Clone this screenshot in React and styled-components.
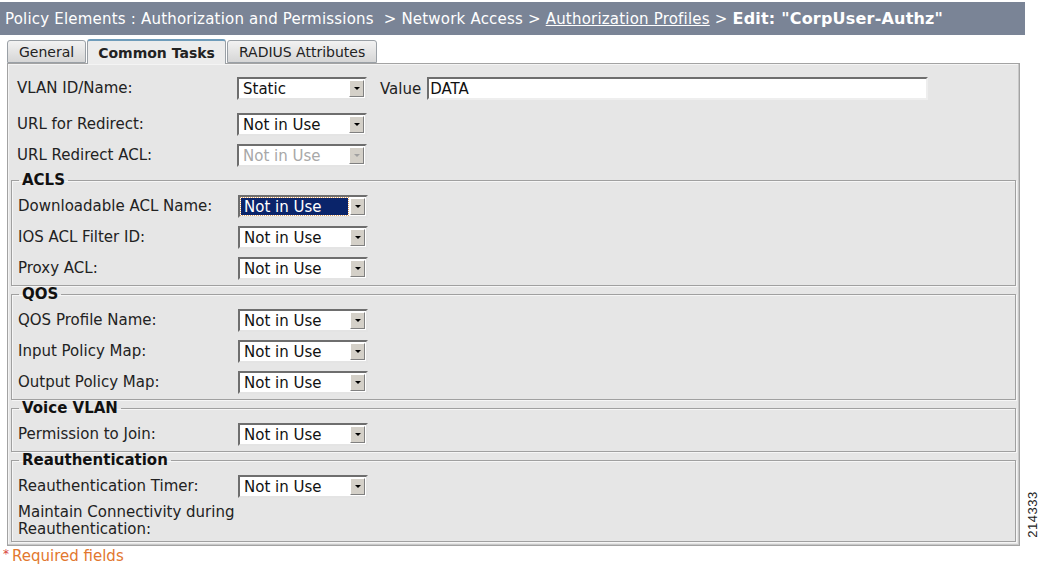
import React from 'react';
import styled, { createGlobalStyle } from 'styled-components';

const GlobalStyle = createGlobalStyle`
  html, body {
    margin: 0;
    padding: 0;
    background: #fff;
  }
  body {
    font-family: "DejaVu Sans", Verdana, sans-serif;
    font-size: 15px;
    color: #222;
  }
`;

const Page = styled.div`
  position: relative;
  width: 1045px;
  height: 572px;
  padding-top: 2px;
  box-sizing: border-box;
  overflow: hidden;
`;

const Header = styled.div`
  width: 1025px;
  height: 33px;
  box-sizing: border-box;
  background: #7a8496;
  color: #fff;
  display: flex;
  align-items: center;
  padding-left: 5px;
  white-space: pre;
  font-size: 15px;
  letter-spacing: 0.2px;
`;

const Crumb = styled.span`
  text-decoration: ${(p) => (p.link ? 'underline' : 'none')};
  font-weight: ${(p) => (p.current ? 'bold' : 'normal')};
  font-size: ${(p) => (p.current ? '16px' : '15px')};
`;

const TabBar = styled.div`
  display: flex;
  align-items: flex-end;
  margin: 3px 0 0 7px;
  height: 25px;
`;

const Tab = styled.div`
  height: ${(p) => (p.active ? '25px' : '23px')};
  box-sizing: border-box;
  padding: 0 ${(p) => (p.active ? '10px' : '11px')};
  display: flex;
  align-items: center;
  font-size: 14px;
  font-weight: ${(p) => (p.active ? 'bold' : 'normal')};
  color: #222;
  border: 1px solid #9aa0a6;
  border-bottom: ${(p) => (p.active ? 'none' : '1px solid #9aa0a6')};
  border-top: ${(p) => (p.active ? '2px solid #6f9cba' : '1px solid #9aa0a6')};
  border-radius: 3px 3px 0 0;
  background: ${(p) => (p.active ? '#ececec' : 'linear-gradient(#f2f2f2, #d6d6d6)')};
  margin-right: 1px;
  position: relative;
  top: ${(p) => (p.active ? '1px' : '0')};
  z-index: ${(p) => (p.active ? 2 : 1)};
`;

const Panel = styled.div`
  margin-left: 7px;
  width: 1013px;
  height: 483px;
  box-sizing: border-box;
  background: #e6e6e6;
  border: 1px solid #a3a3a3;
  box-shadow: inset -1px -1px 0 #c8c8c8, inset 1px 1px 0 #f4f4f4;
  padding: 9px 3px 0 2px;
  display: flex;
  flex-direction: column;
`;

const Row = styled.div`
  display: flex;
  flex-shrink: 0;
  align-items: ${(p) => (p.top ? 'flex-start' : 'center')};
  height: ${(p) => p.h || 31}px;
  margin-top: ${(p) => p.mt || 0}px;
  padding-left: ${(p) => p.pl || 7}px;
  padding-top: ${(p) => (p.top ? 2 : 0)}px;
  box-sizing: border-box;
`;

const Label = styled.div`
  width: ${(p) => p.w || 220}px;
  flex: none;
  font-size: 15px;
  color: #222;
  line-height: 17px;
`;

const SelectBox = styled.div`
  width: 130px;
  height: 23px;
  box-sizing: border-box;
  border: 2px solid;
  border-color: #6e6e6e #e4e4e4 #e4e4e4 #6e6e6e;
  background: #fff;
  display: flex;
  align-items: stretch;
  padding: 1px;
`;

const SelectText = styled.div`
  flex: 1;
  display: flex;
  align-items: center;
  padding-left: 3px;
  font-size: 15px;
  color: ${(p) => (p.disabled ? '#a8a8a8' : '#111')};
  background: ${(p) => (p.selected ? '#0a246a' : 'transparent')};
  outline: ${(p) => (p.selected ? '1px dotted #e0a060' : 'none')};
  ${(p) => p.selected && 'color: #fff;'}
  margin-right: 2px;
  white-space: nowrap;
`;

const SelectButton = styled.div`
  width: 15px;
  flex: none;
  box-sizing: border-box;
  background: #d4d0c8;
  border: 1px solid;
  border-color: #fff #808080 #808080 #fff;
  display: flex;
  align-items: center;
  justify-content: center;
`;

const Arrow = styled.div`
  width: 0;
  height: 0;
  border-left: 3px solid transparent;
  border-right: 3px solid transparent;
  border-top: 3px solid ${(p) => (p.disabled ? '#a0a0a0' : '#000')};
`;

const Select = ({ value = 'Not in Use', disabled, selected }) => (
  <SelectBox>
    <SelectText disabled={disabled} selected={selected}>
      {value}
    </SelectText>
    <SelectButton>
      <Arrow disabled={disabled} />
    </SelectButton>
  </SelectBox>
);

const ValueLabel = styled.span`
  margin: 0 6px 0 13px;
  font-size: 15px;
`;

const TextInput = styled.div`
  width: 501px;
  height: 23px;
  box-sizing: border-box;
  border: 2px solid;
  border-color: #6e6e6e #eeeeee #eeeeee #6e6e6e;
  background: #fff;
  display: flex;
  align-items: center;
  padding-left: 1px;
  font-size: 15px;
  color: #111;
`;

const Group = styled.fieldset`
  flex-shrink: 0;
  margin: ${(p) => p.mt || 0}px 0 0 1px;
  padding: 2px 0 1px 0;
  border: 1px solid #a0a0a0;
  box-shadow: 1px 1px 0 #f6f6f6, inset 1px 1px 0 #f6f6f6;
  border-radius: 0;
  min-width: 0;
`;

const Legend = styled.legend`
  font-weight: bold;
  font-size: 15px;
  padding: 0 3px;
  margin-left: 7px;
  color: #111;
  line-height: 17px;
`;

const Note = styled.div`
  margin: 1px 0 0 3px;
  font-size: 15px;
  color: #e2772e;
`;

const Star = styled.span`
  color: #d8433b;
  font-size: 12px;
  vertical-align: top;
  margin-right: 3px;
`;

const FigureId = styled.div`
  position: absolute;
  left: 1009px;
  top: 507px;
  transform: rotate(-90deg);
  font-family: "Liberation Sans", Arial, sans-serif;
  font-size: 13px;
  color: #222;
  letter-spacing: 0.5px;
`;

export default function App() {
  return (
    <Page>
      <GlobalStyle />
      <Header>
        <Crumb>Policy Elements : Authorization and Permissions  &gt; Network Access &gt; </Crumb>
        <Crumb link>Authorization Profiles</Crumb>
        <Crumb> &gt; </Crumb>
        <Crumb current>Edit: "CorpUser-Authz"</Crumb>
      </Header>
      <TabBar>
        <Tab>General</Tab>
        <Tab active>Common Tasks</Tab>
        <Tab>RADIUS Attributes</Tab>
      </TabBar>
      <Panel>
        <Row>
          <Label>VLAN ID/Name:</Label>
          <Select value="Static" />
          <ValueLabel>Value</ValueLabel>
          <TextInput>DATA</TextInput>
        </Row>
        <Row mt={5}>
          <Label>URL for Redirect:</Label>
          <Select />
        </Row>
        <Row>
          <Label>URL Redirect ACL:</Label>
          <Select disabled />
        </Row>

        <Group mt={1}>
          <Legend>ACLS</Legend>
          <Row pl={6}>
            <Label>Downloadable ACL Name:</Label>
            <Select selected />
          </Row>
          <Row pl={6}>
            <Label>IOS ACL Filter ID:</Label>
            <Select />
          </Row>
          <Row pl={6}>
            <Label>Proxy ACL:</Label>
            <Select />
          </Row>
        </Group>

        <Group>
          <Legend>QOS</Legend>
          <Row pl={6}>
            <Label>QOS Profile Name:</Label>
            <Select />
          </Row>
          <Row pl={6}>
            <Label>Input Policy Map:</Label>
            <Select />
          </Row>
          <Row pl={6}>
            <Label>Output Policy Map:</Label>
            <Select />
          </Row>
        </Group>

        <Group>
          <Legend>Voice VLAN</Legend>
          <Row pl={6}>
            <Label>Permission to Join:</Label>
            <Select />
          </Row>
        </Group>

        <Group>
          <Legend>Reauthentication</Legend>
          <Row pl={6}>
            <Label>Reauthentication Timer:</Label>
            <Select />
          </Row>
          <Row pl={6} h={38} top>
            <Label w={260}>Maintain Connectivity during Reauthentication:</Label>
          </Row>
        </Group>
      </Panel>
      <Note>
        <Star>*</Star>Required fields
      </Note>
      <FigureId>214333</FigureId>
    </Page>
  );
}
